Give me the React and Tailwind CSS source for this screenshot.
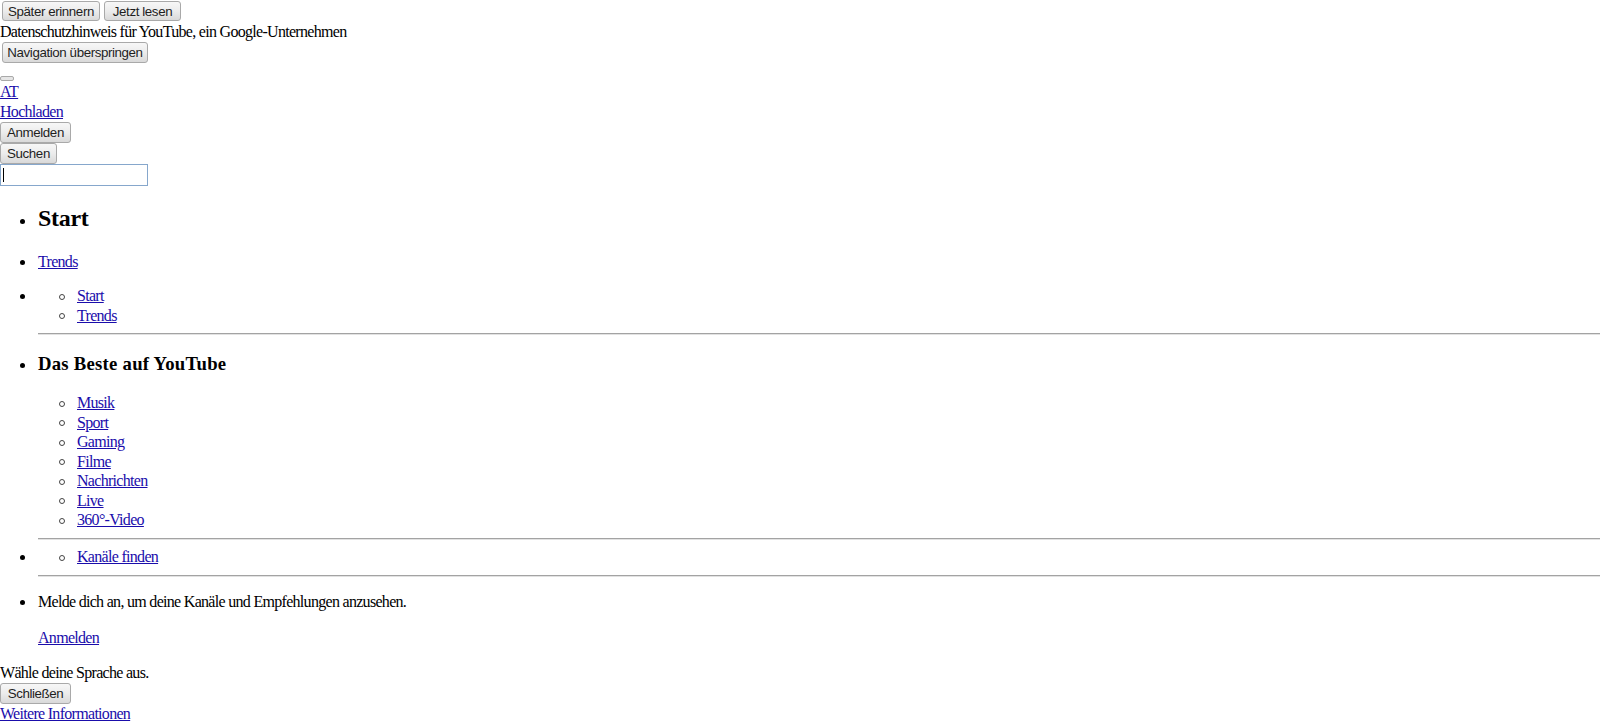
import React from "react";

const linkCls = "text-[#1a0dab] underline";

function Btn({ cls, children }) {
  return (
    <button
      type="button"
      className={`${cls} shrink-0 flex items-center justify-center rounded-[3px] border border-[#a9a9a9] bg-gradient-to-b from-[#f7f7f7] via-[#ececec] to-[#d9d9d9] font-['Liberation_Sans',Arial,sans-serif] text-[13.33px] leading-[15px] tracking-[-0.4px] text-[#1e1e1e]`}
    >
      {children}
    </button>
  );
}

function Disc({ cls }) {
  return (
    <div className="w-[38px] shrink-0 pl-[19.5px]">
      <span className={`block size-[5px] rounded-full bg-black ${cls}`} />
    </div>
  );
}

function Circle() {
  return (
    <div className="w-[39px] shrink-0 pl-[21px]">
      <span className="mt-[7.5px] block size-[6px] rounded-full border border-[#444]" />
    </div>
  );
}

function Hr({ cls }) {
  return <div className={`h-[2px] border-t border-t-[#a3a3a3] border-b border-b-[#e2e2e2] ${cls}`} />;
}

function SubItem({ children }) {
  return (
    <li className="flex h-[19.5px]">
      <Circle />
      <a href="#" className={linkCls}>
        {children}
      </a>
    </li>
  );
}

export default function App() {
  return (
    <div className="w-[1600px] h-[725px] overflow-hidden bg-white text-black font-['Liberation_Serif','Times_New_Roman',serif] text-[16px] leading-[19.5px] tracking-[-0.7px]">
      <div className="flex h-[22px] gap-[4px] pl-[2px] pt-[1px]">
        <Btn cls="w-[98px] h-[20px]">Später erinnern</Btn>
        <Btn cls="w-[77px] h-[20px]">Jetzt lesen</Btn>
      </div>
      <div className="h-[19.5px]">Datenschutzhinweis für YouTube, ein Google-Unternehmen</div>
      <div className="flex h-[21.5px] pl-[2px] pt-[0.5px]">
        <Btn cls="w-[146px] h-[21px]">Navigation überspringen</Btn>
      </div>
      <div className="h-[19px] pt-[13px]">
        <button type="button" className="block h-[5px] w-[14px] rounded-[2px] border border-[#a9a9a9] bg-[#e6e6e6]" />
      </div>
      <div className="h-[19.5px]">
        <a href="#" className={linkCls}>AT</a>
      </div>
      <div className="h-[19.5px]">
        <a href="#" className={linkCls}>Hochladen</a>
      </div>
      <div className="flex h-[22px] pt-[1px]">
        <Btn cls="w-[71px] h-[21px]">Anmelden</Btn>
      </div>
      <div className="flex h-[21px]">
        <Btn cls="w-[57px] h-[21px]">Suchen</Btn>
      </div>
      <div className="flex h-[22px] w-[148px] items-center border border-[#86a7cc] bg-white pl-[2px]">
        <span className="block h-[14px] w-[1px] bg-black" />
      </div>

      <ul className="mt-[18px]">
        <li className="flex">
          <Disc cls="mt-[14.5px]" />
          <h2 className="text-[24px] font-bold leading-[28px] tracking-[-0.3px]">Start</h2>
        </li>
        <li className="mt-[20px] flex h-[19.5px]">
          <Disc cls="mt-[8px]" />
          <a href="#" className={linkCls}>Trends</a>
        </li>
        <li className="mt-[14.5px] flex">
          <Disc cls="mt-[7.5px]" />
          <div className="flex-1">
            <ul>
              <SubItem>Start</SubItem>
              <SubItem>Trends</SubItem>
            </ul>
            <Hr cls="mt-[8px]" />
          </div>
        </li>
        <li className="mt-[18px] flex">
          <Disc cls="mt-[9.5px]" />
          <div className="flex-1">
            <h3 className="text-[18.72px] font-bold leading-[21.5px] tracking-[0.25px]">Das Beste auf YouTube</h3>
            <ul className="mt-[18.5px]">
              <SubItem>Musik</SubItem>
              <SubItem>Sport</SubItem>
              <SubItem>Gaming</SubItem>
              <SubItem>Filme</SubItem>
              <SubItem>Nachrichten</SubItem>
              <SubItem>Live</SubItem>
              <SubItem>360°-Video</SubItem>
            </ul>
            <Hr cls="mt-[8.5px]" />
          </div>
        </li>
        <li className="mt-[7px] flex">
          <Disc cls="mt-[7.5px]" />
          <div className="flex-1">
            <ul>
              <SubItem>Kanäle finden</SubItem>
            </ul>
            <Hr cls="mt-[8.5px]" />
          </div>
        </li>
        <li className="mt-[15px] flex">
          <Disc cls="mt-[7.5px]" />
          <div className="flex-1">
            <p className="h-[19.5px]">Melde dich an, um deine Kanäle und Empfehlungen anzusehen.</p>
            <p className="mt-[16px] h-[19.5px]">
              <a href="#" className={linkCls}>Anmelden</a>
            </p>
          </div>
        </li>
      </ul>
      <div className="mt-[15.5px] h-[19.5px]">Wähle deine Sprache aus.</div>
      <div className="flex h-[21px] pt-[0.5px]">
        <Btn cls="w-[71px] h-[21px]">Schließen</Btn>
      </div>
      <div className="h-[19.5px] pt-[1px]">
        <a href="#" className={linkCls}>Weitere Informationen</a>
      </div>
    </div>
  );
}
